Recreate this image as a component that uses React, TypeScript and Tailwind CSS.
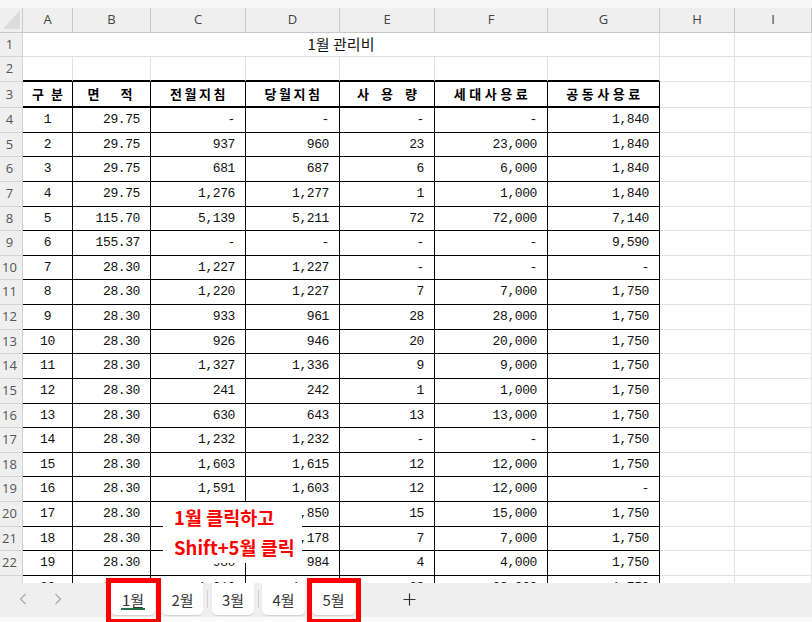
import React from "react"

// column template shared by every sheet row (row header + A..I)
const COLS = "grid grid-cols-[23px_50px_78px_95px_94px_95px_113px_112px_75px_77px]"

const LETTERS = ["A", "B", "C", "D", "E", "F", "G", "H", "I"]

// row heights alternate a little, like the zoomed sheet does
const HEIGHTS = [
    "h-[25px]", "h-[24px]", "h-[25px]", "h-[25px]", "h-[24px]", "h-[25px]", "h-[24px]",
    "h-[25px]", "h-[25px]", "h-[24px]", "h-[25px]", "h-[25px]", "h-[24px]", "h-[25px]",
    "h-[24px]", "h-[25px]", "h-[25px]", "h-[24px]", "h-[25px]", "h-[25px]",
]

const rows: string[][] = [
    ["1", "29.75", "-", "-", "-", "-", "1,840"],
    ["2", "29.75", "937", "960", "23", "23,000", "1,840"],
    ["3", "29.75", "681", "687", "6", "6,000", "1,840"],
    ["4", "29.75", "1,276", "1,277", "1", "1,000", "1,840"],
    ["5", "115.70", "5,139", "5,211", "72", "72,000", "7,140"],
    ["6", "155.37", "-", "-", "-", "-", "9,590"],
    ["7", "28.30", "1,227", "1,227", "-", "-", "-"],
    ["8", "28.30", "1,220", "1,227", "7", "7,000", "1,750"],
    ["9", "28.30", "933", "961", "28", "28,000", "1,750"],
    ["10", "28.30", "926", "946", "20", "20,000", "1,750"],
    ["11", "28.30", "1,327", "1,336", "9", "9,000", "1,750"],
    ["12", "28.30", "241", "242", "1", "1,000", "1,750"],
    ["13", "28.30", "630", "643", "13", "13,000", "1,750"],
    ["14", "28.30", "1,232", "1,232", "-", "-", "1,750"],
    ["15", "28.30", "1,603", "1,615", "12", "12,000", "1,750"],
    ["16", "28.30", "1,591", "1,603", "12", "12,000", "-"],
    ["17", "28.30", "1,835", "1,850", "15", "15,000", "1,750"],
    ["18", "28.30", "1,171", "1,178", "7", "7,000", "1,750"],
    ["19", "28.30", "980", "984", "4", "4,000", "1,750"],
    ["20", "28.30", "1,212", "1,240", "28", "28,000", "1,750"],
]

const rowHead = "flex items-center justify-center pr-[3px] bg-[#efefef] border-r border-b border-[#d4d4d4] text-[13px] text-[#555] font-['Open_Sans',sans-serif]"
const light = "border-r border-b border-[#e1e1e1]"
const num = "flex items-center border-r border-b border-black font-['Liberation_Mono',monospace] text-[13px] tracking-[-0.4px] text-[#111]"
const head = "flex items-center justify-center border-r border-b-2 border-black font-['Noto_Sans_CJK_KR',sans-serif] font-bold text-[13px] text-black"

function Tab({ label, active, w }: { label: string; active?: boolean; w: string }) {
    return (
        <div className={`${w} h-[32px] bg-white rounded-b-[5px] shadow-[0_1px_1px_rgba(0,0,0,0.12)] flex flex-col items-center justify-center relative`}>
            <span className="text-[15px] text-[#333] font-['Noto_Sans_CJK_KR',sans-serif] leading-none">{label}</span>
            {active && <div className="absolute bottom-[5px] left-[10px] right-[10px] h-[2px] bg-[#217346]" />}
        </div>
    )
}

export default function App() {
    return (
        <div className="relative w-[812px] h-[622px] overflow-hidden bg-white">
            <div className="h-[583px] overflow-hidden">
                {/* column letters */}
                <div className="h-[8px] bg-[#f7f7f7]" />
                <div className={`${COLS} h-[25px] bg-[#efefef]`}>
                    <div className="relative border-r border-b border-[#c8c8c8]">
                        <svg className="absolute left-[3px] top-[2px]" width="17" height="19" viewBox="0 0 17 19">
                            <path d="M17 0 L17 19 L0 19 Z" fill="#dcdcdc" />
                        </svg>
                    </div>
                    {LETTERS.map((l) => (
                        <div key={l} className="flex items-center justify-center border-r border-b border-[#c8c8c8] text-[13px] text-[#444] font-['Open_Sans',sans-serif]">
                            {l}
                        </div>
                    ))}
                </div>

                {/* row 1: merged title */}
                <div className={`${COLS} h-[24px]`}>
                    <div className={rowHead}>1</div>
                    <div className={`col-span-7 flex items-center justify-center ${light} text-[15px] text-[#111] font-['Noto_Sans_CJK_KR',sans-serif]`}>
                        1월 관리비
                    </div>
                    <div className={light} />
                    <div className={light} />
                </div>

                {/* row 2 */}
                <div className={`${COLS} h-[25px]`}>
                    <div className={rowHead}>2</div>
                    {[0, 1, 2, 3, 4, 5, 6].map((i) => (
                        <div key={i} className="border-r border-r-[#e1e1e1] border-b-2 border-b-black" />
                    ))}
                    <div className={light} />
                    <div className={light} />
                </div>

                {/* row 3: table header */}
                <div className={`${COLS} h-[26px]`}>
                    <div className={rowHead}>3</div>
                    <div className={`${head} tracking-[2px] pl-[2px]`}>구 분</div>
                    <div className={`${head} gap-[21px] pr-[3px]`}><span>면</span><span>적</span></div>
                    <div className={`${head} tracking-[2.5px] pl-[2px]`}>전월지침</div>
                    <div className={`${head} tracking-[2.5px] pl-[2px]`}>당월지침</div>
                    <div className={`${head} gap-[12px]`}><span>사</span><span>용</span><span>량</span></div>
                    <div className={`${head} tracking-[3.5px] pl-[3px]`}>세대사용료</div>
                    <div className={`${head} tracking-[3.5px] pl-[3px]`}>공동사용료</div>
                    <div className={light} />
                    <div className={light} />
                </div>

                {/* data rows */}
                {rows.map((r, i) => (
                    <div key={i} className={`${COLS} ${HEIGHTS[i]}`}>
                        <div className={rowHead}>{i + 4}</div>
                        <div className={`${num} justify-center`}>{r[0]}</div>
                        {r.slice(1).map((v, j) => (
                            <div key={j} className={`${num} justify-end pr-[10px]`}>{v}</div>
                        ))}
                        <div className={light} />
                        <div className={light} />
                    </div>
                ))}
            </div>

            {/* sheet tabs */}
            <div className="h-[34px] bg-[#efefef] flex items-start">
                <div className="w-[111px] h-[32px] flex items-center pl-[19px] gap-[27px]">
                    <svg width="8" height="12" viewBox="0 0 8 12"><path d="M6.5 1 L1.5 6 L6.5 11" fill="none" stroke="#a8a8a8" strokeWidth="1.2" /></svg>
                    <svg width="8" height="12" viewBox="0 0 8 12"><path d="M1.5 1 L6.5 6 L1.5 11" fill="none" stroke="#a8a8a8" strokeWidth="1.2" /></svg>
                </div>
                <Tab label="1월" active w="w-[44px]" />
                <div className="w-[7px]" />
                <Tab label="2월" w="w-[41px]" />
                <div className="w-[9px] h-[32px] flex items-center justify-center"><div className="w-px h-[18px] bg-[#d0d0d0]" /></div>
                <Tab label="3월" w="w-[42px]" />
                <div className="w-[8px] h-[32px] flex items-center justify-center"><div className="w-px h-[18px] bg-[#d0d0d0]" /></div>
                <Tab label="4월" w="w-[43px]" />
                <div className="w-[7px]" />
                <Tab label="5월" w="w-[43px]" />
                <div className="h-[32px] flex items-center pl-[48px]">
                    <svg width="13" height="13" viewBox="0 0 13 13"><path d="M6.5 0.5 V12.5 M0.5 6.5 H12.5" stroke="#333" strokeWidth="1.2" /></svg>
                </div>
            </div>
            <div className="h-[5px] bg-[#fafafa]" />

            {/* annotation */}
            <div className="absolute left-[163px] top-[502px] w-[139px] h-[61px] bg-white pl-[11px] flex flex-col font-['Noto_Sans_CJK_KR',sans-serif] font-bold text-[18.5px] leading-[30px] text-[#ff0000] whitespace-nowrap">
                <span>1월 클릭하고</span>
                <span>Shift+5월 클릭</span>
            </div>

            {/* red highlight boxes */}
            <div className="absolute left-[106px] top-[578px] w-[55px] h-[46px] border-[5px] border-[#ff0000]" />
            <div className="absolute left-[307px] top-[578px] w-[54px] h-[46px] border-[5px] border-[#ff0000]" />
        </div>
    )
}
